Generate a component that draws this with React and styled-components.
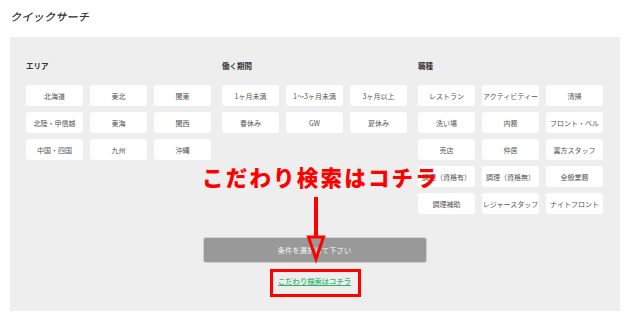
import { createGlobalStyle, styled } from "styled-components";

const GlobalStyle = createGlobalStyle`
  html, body {
    margin: 0;
    padding: 0;
    background: #fff;
  }
  body {
    font-family: "Noto Sans CJK JP", "Noto Sans", sans-serif;
    color: #333;
  }
`;

const GROUPS = [
  {
    title: "エリア",
    items: ["北海道", "東北", "関東", "北陸・甲信越", "東海", "関西", "中国・四国", "九州", "沖縄"],
  },
  {
    title: "働く期間",
    items: ["1ヶ月未満", "1〜3ヶ月未満", "3ヶ月以上", "春休み", "GW", "夏休み"],
  },
  {
    title: "職種",
    items: [
      "レストラン",
      "アクティビティー",
      "清掃",
      "洗い場",
      "内務",
      "フロント・ベル",
      "売店",
      "仲居",
      "裏方スタッフ",
      "調理（資格有）",
      "調理（資格無）",
      "全般業務",
      "調理補助",
      "レジャースタッフ",
      "ナイトフロント",
    ],
  },
];

function App() {
  return (
    <Page>
      <GlobalStyle />
      <Title>クイックサーチ</Title>
      <Panel>
        <Groups>
          {GROUPS.map((group) => (
            <Group key={group.title}>
              <GroupTitle>{group.title}</GroupTitle>
              <Choices>
                {group.items.map((item) => (
                  <Choice key={item}>{item}</Choice>
                ))}
              </Choices>
            </Group>
          ))}
        </Groups>
        <Submit disabled>条件を選択して下さい</Submit>
        <DetailLink href="#">こだわり検索はコチラ</DetailLink>
      </Panel>

      <Callout>こだわり検索はコチラ</Callout>
      <Arrow width="20" height="66" viewBox="0 0 20 66">
        <line x1="10" y1="0" x2="10" y2="40" stroke="#ff0000" strokeWidth="4" />
        <polygon
          points="2.5,40 17.5,40 10,62"
          fill="none"
          stroke="#ff0000"
          strokeWidth="3"
          strokeLinejoin="miter"
        />
      </Arrow>
      <Highlight />
    </Page>
  );
}

export default App;

const Page = styled.div`
  position: relative;
  width: 640px;
  height: 330px;
  padding: 8px 10px 0;
  box-sizing: border-box;
  overflow: hidden;
`;

const Title = styled.h1`
  margin: 0;
  font-size: 11px;
  line-height: 16px;
  font-weight: 500;
  font-style: italic;
  color: #333;
  letter-spacing: 0.3px;
`;

const Panel = styled.section`
  margin-top: 13px;
  width: 610px;
  box-sizing: border-box;
  background: #eeeeee;
  padding: 23px 17px 24px 16px;
  display: flex;
  flex-direction: column;
  align-items: center;
`;

const Groups = styled.div`
  align-self: stretch;
  display: grid;
  grid-template-columns: repeat(3, 185px);
  column-gap: 11px;
  align-items: start;
`;

const Group = styled.div`
  display: flex;
  flex-direction: column;
`;

const GroupTitle = styled.h2`
  margin: 0 0 13px;
  font-size: 7.5px;
  line-height: 12px;
  font-weight: 700;
  color: #333;
`;

const Choices = styled.div`
  display: grid;
  grid-template-columns: repeat(3, 57px);
  column-gap: 7px;
  row-gap: 6px;
`;

const Choice = styled.button`
  height: 21px;
  padding: 0;
  border: none;
  border-radius: 3px;
  background: #fff;
  font-family: inherit;
  font-size: 7px;
  color: #555;
  white-space: nowrap;
  cursor: pointer;
`;

const Submit = styled.button`
  margin-top: 23px;
  width: 224px;
  height: 26px;
  border: 1px solid #cfcfcf;
  border-radius: 3px;
  background: #999999;
  color: #f4f4f4;
  font-family: inherit;
  font-size: 7.2px;
  letter-spacing: 0.2px;
`;

const DetailLink = styled.a`
  margin-top: 12px;
  font-size: 7.3px;
  line-height: 12px;
  color: #2fb36e;
  text-decoration: underline;
  font-weight: 500;
`;

const Callout = styled.div`
  position: absolute;
  left: 202px;
  top: 163px;
  font-size: 21.5px;
  line-height: 28px;
  font-weight: 900;
  color: #ff0000;
  letter-spacing: 2.2px;
  white-space: nowrap;
`;

const Arrow = styled.svg`
  position: absolute;
  left: 306px;
  top: 197px;
  overflow: visible;
`;

const Highlight = styled.div`
  position: absolute;
  left: 270px;
  top: 269px;
  width: 91px;
  height: 28px;
  box-sizing: border-box;
  border: 3px solid #ff0000;
`;
